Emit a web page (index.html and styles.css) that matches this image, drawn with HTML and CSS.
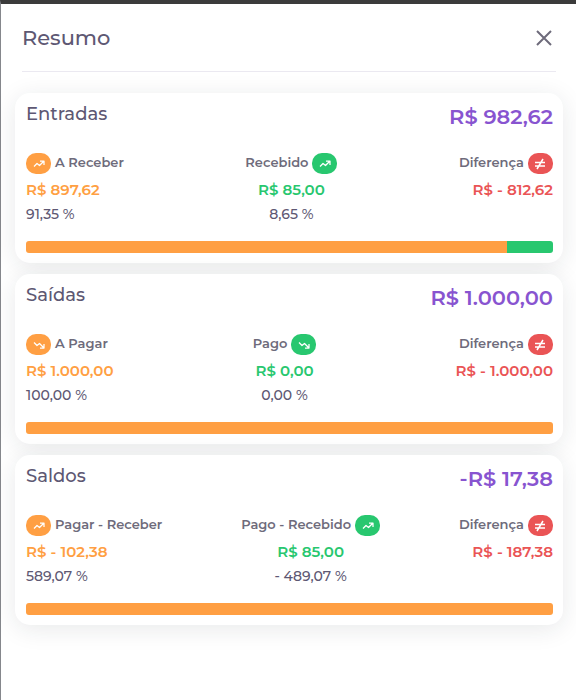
FILE: index.html
```
<!DOCTYPE html>
<html lang="pt-BR">
<head>
    <meta charset="UTF-8">
    <meta name="viewport" content="width=device-width, initial-scale=1.0">
    <title>Resumo</title>
    <link rel="stylesheet" href="styles.css">
</head>
<body>
    <!-- Icones compartilhados -->
    <svg class="icon-defs" aria-hidden="true">
        <symbol id="icon-up" viewBox="0 0 48 48">
            <path d="M4 34 L16 22 L26 30 L42 14 M28 12 H44 V28"/>
        </symbol>
        <symbol id="icon-down" viewBox="0 0 48 48">
            <path d="M4 14 L16 26 L26 18 L42 34 M28 36 H44 V20"/>
        </symbol>
        <symbol id="icon-diff" viewBox="0 0 48 48">
            <path d="M4 18 H44 M4 32 H44 M36 4 L12 44"/>
        </symbol>
    </svg>

    <div class="modal">
        <header class="modal-header">
            <h1>Resumo</h1>
            <button class="btn-close" type="button" aria-label="Fechar">
                <svg viewBox="0 0 16 16"><path d="M1 1 L15 15 M15 1 L1 15"/></svg>
            </button>
        </header>

        <main class="cards">
            <!-- Entradas -->
            <section class="card">
                <div class="card-top">
                    <h2>Entradas</h2>
                    <span class="total">R$ 982,62</span>
                </div>
                <div class="columns">
                    <div class="column">
                        <div class="label"><span class="badge orange"><svg><use href="#icon-up"/></svg></span>A Receber</div>
                        <div class="value text-orange">R$ 897,62</div>
                        <div class="percent">91,35 %</div>
                    </div>
                    <div class="column center">
                        <div class="label">Recebido<span class="badge green"><svg><use href="#icon-up"/></svg></span></div>
                        <div class="value text-green">R$ 85,00</div>
                        <div class="percent">8,65 %</div>
                    </div>
                    <div class="column right">
                        <div class="label">Diferença<span class="badge red"><svg><use href="#icon-diff"/></svg></span></div>
                        <div class="value text-red">R$ - 812,62</div>
                    </div>
                </div>
                <div class="progress">
                    <div class="bar orange" style="width: 91.35%"></div>
                    <div class="bar green" style="width: 8.65%"></div>
                </div>
            </section>

            <!-- Saidas -->
            <section class="card">
                <div class="card-top">
                    <h2>Saídas</h2>
                    <span class="total">R$ 1.000,00</span>
                </div>
                <div class="columns">
                    <div class="column">
                        <div class="label"><span class="badge orange"><svg><use href="#icon-down"/></svg></span>A Pagar</div>
                        <div class="value text-orange">R$ 1.000,00</div>
                        <div class="percent">100,00 %</div>
                    </div>
                    <div class="column center">
                        <div class="label">Pago<span class="badge green"><svg><use href="#icon-down"/></svg></span></div>
                        <div class="value text-green">R$ 0,00</div>
                        <div class="percent">0,00 %</div>
                    </div>
                    <div class="column right">
                        <div class="label">Diferença<span class="badge red"><svg><use href="#icon-diff"/></svg></span></div>
                        <div class="value text-red">R$ - 1.000,00</div>
                    </div>
                </div>
                <div class="progress">
                    <div class="bar orange" style="width: 100%"></div>
                </div>
            </section>

            <!-- Saldos -->
            <section class="card">
                <div class="card-top">
                    <h2>Saldos</h2>
                    <span class="total">-R$ 17,38</span>
                </div>
                <div class="columns">
                    <div class="column">
                        <div class="label"><span class="badge orange"><svg><use href="#icon-up"/></svg></span>Pagar - Receber</div>
                        <div class="value text-orange">R$ - 102,38</div>
                        <div class="percent">589,07 %</div>
                    </div>
                    <div class="column center">
                        <div class="label">Pago - Recebido<span class="badge green"><svg><use href="#icon-up"/></svg></span></div>
                        <div class="value text-green">R$ 85,00</div>
                        <div class="percent">- 489,07 %</div>
                    </div>
                    <div class="column right">
                        <div class="label">Diferença<span class="badge red"><svg><use href="#icon-diff"/></svg></span></div>
                        <div class="value text-red">R$ - 187,38</div>
                    </div>
                </div>
                <div class="progress">
                    <div class="bar orange" style="width: 100%"></div>
                </div>
            </section>
        </main>
    </div>
</body>
</html>
```

FILE: styles.css
```
* {
    margin: 0;
    padding: 0;
    box-sizing: border-box;
}

body {
    font-family: Montserrat, Inter, sans-serif;
    background-color: #fff;
    color: #5e5873;
}

.icon-defs {
    display: none;
}

.modal {
    min-height: 100vh;
    border-top: 4px solid #3b3b3b;
    border-left: 1px solid #85878c;
}

.modal-header {
    display: flex;
    justify-content: space-between;
    align-items: center;
    height: 68px;
    margin: 0 20px 21px 21px;
    border-bottom: 1px solid #ebe9f1;
}

h1 {
    font-size: 21px;
    font-weight: 500;
    line-height: 28px;
}

.btn-close {
    display: flex;
    padding: 4px;
    border: none;
    background: none;
    color: #6e6b7b;
    cursor: pointer;
}

.btn-close svg {
    width: 16px;
    height: 16px;
    fill: none;
    stroke: currentColor;
    stroke-width: 2;
}

.cards {
    display: flex;
    flex-direction: column;
    gap: 11px;
    padding: 0 13px 20px 14px;
}

.card {
    padding: 10px 10px 10px 11px;
    border-radius: 15px;
    background-color: #fff;
    box-shadow: 0 4px 24px rgba(34, 41, 47, 0.1);
}

.card-top {
    display: flex;
    justify-content: space-between;
    align-items: flex-start;
    margin-bottom: 22px;
}

h2 {
    font-size: 18px;
    font-weight: 500;
    line-height: 22px;
}

.total {
    font-size: 21px;
    font-weight: 600;
    line-height: 28px;
    color: #8854d0;
}

.columns {
    display: flex;
    justify-content: space-between;
    margin-bottom: 16px;
}

.center {
    text-align: center;
}

.right {
    text-align: right;
}

.label {
    display: flex;
    gap: 4px;
    height: 21px;
    margin-bottom: 3px;
    font-size: 13px;
    font-weight: 600;
    line-height: 19px;
    color: #6e6b7b;
}

.right .label {
    justify-content: flex-end;
}

.value {
    font-size: 15px;
    font-weight: 600;
    line-height: 26px;
}

.percent {
    font-size: 14px;
    font-weight: 500;
    line-height: 22px;
}

.badge {
    display: flex;
    justify-content: center;
    align-items: center;
    width: 25px;
    height: 21px;
    border-radius: 10px;
    color: #fff;
}

.badge svg {
    width: 12px;
    height: 12px;
    fill: none;
    stroke: currentColor;
    stroke-width: 5;
    stroke-linejoin: round;
}

.badge.red svg {
    stroke-width: 6;
}

.progress {
    display: flex;
    height: 12px;
    border-radius: 3px;
    overflow: hidden;
}

.orange {
    background-color: #ff9f43;
}

.green {
    background-color: #28c76f;
}

.red {
    background-color: #ea5455;
}

.text-orange {
    color: #ff9f43;
}

.text-green {
    color: #28c76f;
}

.text-red {
    color: #ea5455;
}
```
